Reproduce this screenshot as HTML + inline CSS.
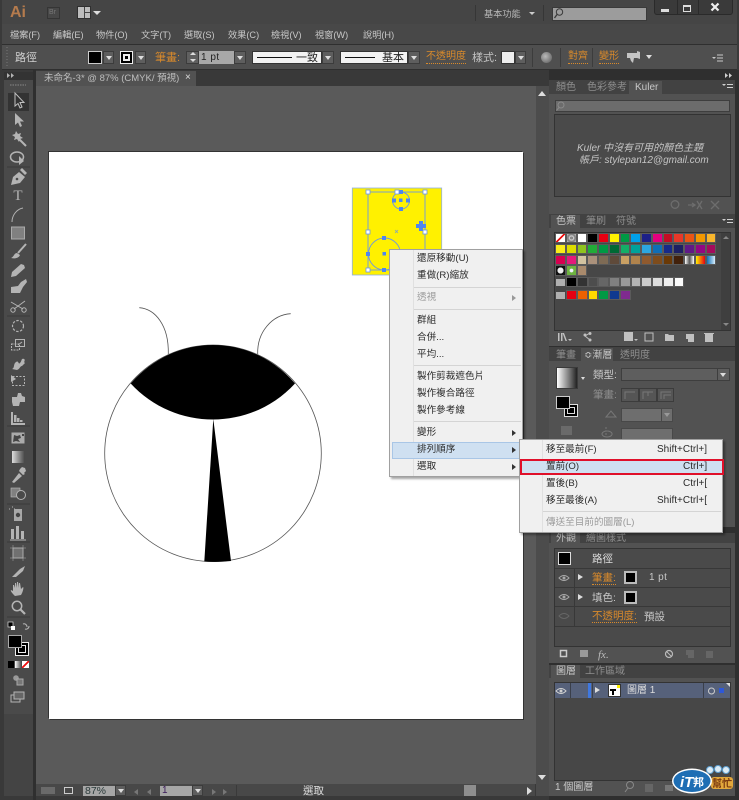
<!DOCTYPE html>
<html><head><meta charset="utf-8"><style>
html,body{margin:0;padding:0;background:#3a3a3a}
#r{position:relative;width:739px;height:800px;overflow:hidden;background:#3a3a3a;font-family:"Liberation Sans","Noto Sans CJK TC",sans-serif;font-size:10px;color:#c8c8c8;filter:blur(.3px)}
.b{position:absolute;box-sizing:border-box}
.t{position:absolute;line-height:14px;white-space:nowrap;transform:translateY(1px)}
.o{color:#d98a2b}
.u{border-bottom:1px dotted #d98a2b;line-height:12px}
.d{color:#8e8e8e}
.n{font-size:9.2px}
.dd{position:absolute;box-sizing:border-box;background:#5e5e5e;border:1px solid #3c3c3c}
.dd:after{content:"";position:absolute;left:50%;top:50%;margin:-2px 0 0 -3px;border:3px solid transparent;border-top:4px solid #ddd;border-bottom:0}
.m{color:#2b2b2b;font-size:9.6px}
.sep{position:absolute;height:1px;background:#d4d4d4}
.ar{position:absolute;border:3px solid transparent;border-left:4px solid #333;border-right:0}
.sw{position:absolute;display:flex}
.sw i{display:block;width:10.75px;height:10.4px;box-sizing:border-box;border:1px solid #5a5a5a;flex:none}
svg{position:absolute;left:0;top:0}
</style></head><body><div id="r">

<!-- chrome rows -->
<div class="b" style="left:2px;top:0;width:735px;height:24px;background:#454545"></div>
<div class="b" style="left:2px;top:24px;width:735px;height:20px;background:#484848"></div>
<div class="b" style="left:2px;top:44px;width:735px;height:26px;background:#4f4f4f;border-top:1px solid #2f2f2f;border-bottom:1px solid #2f2f2f"></div>
<div class="b" style="left:0;top:70px;width:739px;height:730px;background:#393939"></div>

<!-- title row -->
<div class="t" style="left:10px;top:5px;font-size:16px;font-weight:bold;color:#b57b4d">Ai</div>
<div class="b" style="left:47px;top:7px;width:13px;height:12px;border:1px solid #353535;background:#484848"></div>
<div class="t" style="left:49px;top:5px;font-size:7px;color:#777">Br</div>
<div class="b" style="left:77px;top:6px;width:14px;height:13px;background:#bdbdbd;border:1px solid #2f2f2f"></div>
<div class="b" style="left:84px;top:7px;width:1px;height:11px;background:#444"></div>
<div class="b" style="left:84px;top:12px;width:6px;height:1px;background:#444"></div>
<div class="b" style="left:93px;top:11px;border:4px solid transparent;border-top:4px solid #ddd;border-bottom:0"></div>
<div class="b" style="left:475px;top:5px;width:1px;height:16px;background:#363636"></div>
<div class="t n" style="left:484px;top:6px;color:#b8b8b8">基本功能</div>
<div class="b" style="left:529px;top:12px;border:3px solid transparent;border-top:3px solid #ccc;border-bottom:0"></div>
<div class="b" style="left:543px;top:5px;width:1px;height:16px;background:#363636"></div>
<div class="b" style="left:552px;top:7px;width:95px;height:14px;background:#9c9c9c;border:1px solid #3a3a3a"></div>
<div class="b" style="left:654px;top:0;width:79px;height:15px;background:#3a3a3a;border:1px solid #2a2a2a;border-top:0;border-radius:0 0 3px 3px"></div>
<div class="b" style="left:677px;top:0;width:1px;height:14px;background:#2a2a2a"></div>
<div class="b" style="left:698px;top:0;width:1px;height:14px;background:#2a2a2a"></div>
<div class="b" style="left:661px;top:9px;width:8px;height:3px;background:#ddd"></div>
<div class="b" style="left:683px;top:5px;width:8px;height:7px;border:1px solid #ddd;border-top-width:2px"></div>
<svg width="739" height="800" viewBox="0 0 739 800">
<path d="M711.500 3.500l7 7M718.500 3.500l-7 7" stroke="#eee" stroke-width="2.200"/>
<circle cx="559.500" cy="12" r="3.200" fill="none" stroke="#3a3a3a" stroke-width="1"/><path d="M557 14.500l-2.500 3.500" stroke="#3a3a3a" stroke-width="1.300"/>
<path d="M7 47v20" stroke="#777" stroke-width="1" stroke-dasharray="1 2"/>
<path d="M627 53h10v-2l3 1v7l-3-1h-3l-1 5-2-2-1-3h-3z" fill="#c4c4c4"/>
<path d="M712 57h4l-2 2zM717 54.500h6v1h-6zM717 57.500h6v1h-6zM717 60.500h6v1h-6z" fill="#c8c8c8"/>
</svg>

<!-- menu row -->
<div class="t n" style="left:10px;top:27px">檔案(F)</div>
<div class="t n" style="left:53px;top:27px">編輯(E)</div>
<div class="t n" style="left:96px;top:27px">物件(O)</div>
<div class="t n" style="left:141px;top:27px">文字(T)</div>
<div class="t n" style="left:184px;top:27px">選取(S)</div>
<div class="t n" style="left:228px;top:27px">效果(C)</div>
<div class="t n" style="left:271px;top:27px">檢視(V)</div>
<div class="t n" style="left:315px;top:27px">視窗(W)</div>
<div class="t n" style="left:363px;top:27px">說明(H)</div>

<!-- control bar -->
<div class="t" style="left:15px;top:50px;font-size:11px;color:#d0d0d0">路徑</div>
<div class="b" style="left:88px;top:51px;width:14px;height:13px;background:#000;border:1px solid #ccc"></div>
<div class="dd" style="left:103px;top:51px;width:11px;height:13px"></div>
<div class="b" style="left:120px;top:51px;width:13px;height:13px;background:#000;border:1px solid #eee"></div>
<div class="b" style="left:123px;top:54px;width:7px;height:7px;border:2px solid #eee;background:#000"></div>
<div class="dd" style="left:135px;top:51px;width:11px;height:13px"></div>
<div class="t o" style="left:155px;top:50px;font-size:11px">筆畫:</div>
<div class="b" style="left:186px;top:51px;width:13px;height:13px;background:#606060;border:1px solid #3c3c3c"></div>
<div class="b" style="left:190px;top:52px;border:3px solid transparent;border-bottom:3px solid #ddd;border-top:0"></div>
<div class="b" style="left:190px;top:59px;border:3px solid transparent;border-top:3px solid #ddd;border-bottom:0"></div>
<div class="b" style="left:199px;top:51px;width:35px;height:13px;background:#a8a8a8"></div>
<div class="t" style="left:201px;top:50px;font-size:10px;color:#222;letter-spacing:.5px">1 pt</div>
<div class="dd" style="left:234px;top:51px;width:12px;height:13px"></div>
<div class="b" style="left:252px;top:51px;width:70px;height:13px;background:#f2f2f2;border:1px solid #333"></div>
<div class="b" style="left:257px;top:57px;width:35px;height:1px;background:#111"></div>
<div class="t" style="left:296px;top:50px;font-size:11px;color:#222">一致</div>
<div class="dd" style="left:322px;top:51px;width:12px;height:13px"></div>
<div class="b" style="left:340px;top:51px;width:68px;height:13px;background:#f2f2f2;border:1px solid #333"></div>
<div class="b" style="left:345px;top:57px;width:30px;height:1px;background:#111"></div>
<div class="t" style="left:382px;top:50px;font-size:11px;color:#222">基本</div>
<div class="dd" style="left:408px;top:51px;width:12px;height:13px"></div>
<div class="t o u" style="left:426px;top:50px;font-size:10px">不透明度</div>
<div class="t" style="left:472px;top:50px;font-size:11px;color:#c4c4c4">樣式:</div>
<div class="b" style="left:501px;top:51px;width:14px;height:13px;background:#eee;border:1px solid #333"></div>
<div class="dd" style="left:515px;top:51px;width:11px;height:13px"></div>
<div class="b" style="left:532px;top:48px;width:1px;height:19px;background:#3c3c3c"></div>
<div class="b" style="left:541px;top:52px;width:11px;height:11px;border-radius:50%;background:radial-gradient(circle at 40% 40%,#bbb,#555)"></div>
<div class="b" style="left:560px;top:48px;width:1px;height:19px;background:#3c3c3c"></div>
<div class="t o u" style="left:568px;top:50px;font-size:10px">對齊</div>
<div class="b" style="left:592px;top:48px;width:1px;height:19px;background:#3c3c3c"></div>
<div class="t o u" style="left:599px;top:50px;font-size:10px">變形</div>
<div class="b" style="left:646px;top:55px;border:3px solid transparent;border-top:4px solid #ddd;border-bottom:0"></div>

<!-- document tab & canvas -->
<div class="b" style="left:36px;top:71px;width:160px;height:15px;background:#525252"></div>
<div class="t" style="left:44px;top:71px;font-size:9.500px;color:#bdbdbd">未命名-3* @ 87% (CMYK/ 預視)</div>
<div class="t" style="left:185px;top:70px;font-size:10px;color:#ddd">×</div>
<div class="b" style="left:36px;top:86px;width:500px;height:698px;background:#5a5a5a"></div>
<div class="b" style="left:536px;top:86px;width:13px;height:698px;background:#4c4c4c"></div>
<div class="b" style="left:538px;top:91px;border:5px solid transparent;border-bottom:5px solid #ddd;border-top:0;border-left-width:4px;border-right-width:4px"></div>
<div class="b" style="left:538px;top:775px;border:5px solid transparent;border-top:5px solid #ddd;border-bottom:0;border-left-width:4px;border-right-width:4px"></div>
<div class="b" style="left:49px;top:152px;width:474px;height:567px;background:#fff;box-shadow:-1px -1px 0 #333,1px 1px 0 #333"></div>

<!-- artwork -->
<svg width="739" height="800" viewBox="0 0 739 800">
<circle cx="213" cy="453.300" r="108.300" fill="#fff" stroke="#555" stroke-width=".8"/>
<path d="M130.700 383.500C175 332.200 251 332.200 295 383.500C251 431.500 175 431.500 130.700 383.500Z" fill="#000"/>
<path d="M213.300 419L204.300 561.500Q218 562.500 231 561Z" fill="#000"/>
<path d="M139.300 307.700C155 309 169 325 168.300 354" fill="none" stroke="#555" stroke-width=".8"/>
<path d="M290.700 313.700C272 315 257 332 257.700 354" fill="none" stroke="#555" stroke-width=".8"/>
<rect x="352.300" y="188" width="89.400" height="87" fill="#fff100" stroke="#8fb0e8" stroke-width=".8"/>
<g fill="none" stroke="#6a96e6" stroke-width=".9">
<rect x="368" y="192" width="57" height="78"/>
<circle cx="401" cy="200.500" r="8.500"/>
<circle cx="384.500" cy="254" r="16"/>
</g>
<g fill="#4f86ee">
<rect x="399" y="190" width="4" height="4"/><rect x="399" y="198.500" width="3.500" height="3.500"/><rect x="392" y="198.500" width="4" height="4"/><rect x="406" y="198.500" width="4" height="4"/><rect x="399" y="207" width="4" height="4"/>
<rect x="382" y="236" width="4" height="4"/><rect x="382.500" y="252" width="3.500" height="3.500"/><rect x="366" y="252" width="4" height="4"/><rect x="382" y="268" width="4" height="4"/>
<path d="M419 221h4v3h3v4h-3v3h-4v-3h-3v-4h3z"/>
</g>
<g fill="#fff" stroke="#6a96e6" stroke-width=".8">
<rect x="366" y="190" width="4" height="4"/><rect x="395" y="190" width="4" height="4"/><rect x="423" y="190" width="4" height="4"/><rect x="366" y="230" width="4" height="4"/><rect x="423" y="230" width="4" height="4"/><rect x="366" y="268" width="4" height="4"/>
</g>
<path d="M395 230l3 3M398 230l-3 3" stroke="#6a96e6" stroke-width=".6"/>
</svg>

<!-- left toolbar -->
<div class="b" style="left:4px;top:72px;width:29px;height:8px;background:#333"></div>
<div class="b" style="left:4px;top:80px;width:29px;height:634px;background:#4a4a4a"></div>
<div class="b" style="left:4px;top:714px;width:29px;height:82px;background:#444"></div>
<div class="b" style="left:33px;top:70px;width:3px;height:730px;background:#2f2f2f"></div>
<div class="b" style="left:8px;top:93px;width:21px;height:18px;background:#333"></div>
<svg width="739" height="800" viewBox="0 0 739 800">
<defs><linearGradient id="tg"><stop offset="0" stop-color="#ddd"/><stop offset="1" stop-color="#444"/></linearGradient></defs>
<path d="M7 73l3 2.500-3 2.500zM11 73l3 2.500-3 2.500z" fill="#b4b4b4"/>
<path d="M10 85h16" stroke="#888" stroke-dasharray="1.500 1"/>
<path d="M7 167h23M7 316h23M7 426h23M7 504h23M7 542h23M7 617h23" stroke="#3a3a3a"/>
<g fill="#b4b4b4" stroke="none">
<g transform="translate(18,101)"><path d="M-3-8v13l3-2.500 2 4.500 2-1-2-4.500h4z" fill="#333" stroke="#c0c0c0"/></g>
<g transform="translate(18,120)"><path d="M-3-7v12l3-2.500 2 4.500 2-1-2-4.500h4z"/></g>
<g transform="translate(18,138)"><path d="M-2-7l2 3 3-1-1 3 3 2-3 1-1 3-2-3-3 1 1-3-3-2 3-1z"/><path d="M1 1l7 7" stroke="#b4b4b4" stroke-width="2"/></g>
<g transform="translate(18,158)"><ellipse cx="-1" cy="-1" rx="6.500" ry="5" fill="none" stroke="#b4b4b4" stroke-width="1.500"/><path d="M1-2v9l5-4z"/></g>
<g transform="translate(18,177)"><path d="M-7 8l2-8 6-5 6 5-5 6z"/><path d="M2-7l2-2 5 5-2 2z"/><circle cx="-1" cy="2" r="1.300" fill="#4a4a4a"/></g>
<text x="18" y="200" text-anchor="middle" style="font-family:'Liberation Serif',serif;font-size:15px">T</text>
<g transform="translate(18,215)"><path d="M-6 7C-6 0-1-6 5-7" fill="none" stroke="#b4b4b4"/></g>
<g transform="translate(18,233)"><rect x="-6.500" y="-6" width="13" height="12" fill="#808080" stroke="#aaa"/></g>
<g transform="translate(18,251)"><path d="M-7 7C-4 6-4 2-1 2L2 4C1 7-3 8-7 7z"/><path d="M0 2l8-9" stroke="#b4b4b4" stroke-width="2"/></g>
<g transform="translate(18,270)"><path d="M-7 7l1-5 9-8 3 1 1 3-9 8z"/></g>
<g transform="translate(18,287)"><path d="M-7 0L0-1 3-5 8-8 9-5 5 0 2 6H-7z"/></g>
<g transform="translate(18,306)" fill="none" stroke="#b4b4b4"><circle cx="-5" cy="4" r="2.200"/><circle cx="6" cy="4" r="2.200"/><path d="M-7-4L5 3M7-5L-4 3"/></g>
<g transform="translate(18,326)"><circle r="5.500" fill="none" stroke="#b4b4b4" stroke-width="1.200" stroke-dasharray="2.500 1.500"/></g>
<g transform="translate(18,345)" fill="none" stroke="#b4b4b4"><rect x="-6.500" y="-1" width="8" height="6" stroke-dasharray="2 1"/><rect x="-2.500" y="-5.500" width="9" height="7"/><path d="M0 0l4-3"/></g>
<g transform="translate(18,363)"><path d="M-6 6c3-1 1-5 4-7s2 3 4 1 1-5 4-4c2 1-1 3 1 4l-3 3c-2 0-2 3-5 4z"/></g>
<g transform="translate(18,381)" fill="none" stroke="#b4b4b4"><rect x="-5.500" y="-4.500" width="12" height="9" stroke-dasharray="2 1.500"/><path d="M-7-6l5 4-5 3z" fill="#b4b4b4" stroke="none"/></g>
<g transform="translate(18,400)"><path d="M-6-3h5l1-4h3l1 3 3 1v5h-5l-1 4h-6l-1-4z"/></g>
<g transform="translate(18,419)"><path d="M-7 6v-13h2v11h12v2zM-4 3v-7h2.500v7zM-1 3v-4h2.500v4zM2 3v-2h2.500v2z"/></g>
<g transform="translate(18,438)"><rect x="-6.500" y="-5.500" width="13" height="11" fill="#aaa"/><path d="M-4-3l3 1 3-1 1 3-3 1 2 3-4-1-3 1zM4-4h2v2H4z" fill="#444"/></g>
<rect x="12" y="451" width="13" height="12" fill="url(#tg)"/>
<g transform="translate(18,475)"><path d="M-6 7l7-9 3 3-8 7z"/><path d="M2-6l2-2 3 1 1 3-2 2 1 1-2 1-4-4z"/></g>
<g transform="translate(18,493)"><rect x="-7" y="-5" width="9" height="9" fill="#808080" stroke="#bbb" stroke-width=".6"/><circle cx="3" cy="2" r="4.500" fill="#4a4a4a" stroke="#b4b4b4"/></g>
<g transform="translate(18,515)"><path d="M-9-6h2M-6-8h1M-4-6h1" stroke="#b4b4b4" stroke-dasharray="1 1" fill="none"/><rect x="-4" y="-6" width="8" height="12" fill="#a8a8a8"/><circle cy="0" r="2.200" fill="#444"/></g>
<g transform="translate(18,533)"><path d="M-7 6V-4h3V6zM-2 6V-7h3V6zM3 6V-2h3V6z"/><path d="M-8 7H8" stroke="#b4b4b4"/></g>
<g transform="translate(18,553)"><rect x="-5" y="-5" width="10" height="10" fill="#707070" stroke="#aaa"/><path d="M-8-5h16M-8 5h16M-5-8v16M5-8v16" stroke="#aaa" stroke-width=".5"/></g>
<g transform="translate(18,571)"><path d="M-6 6l8-8 5-3-2 5-7 6z"/></g>
<g transform="translate(18,589)"><path d="M-3 7c-2-2-5-5-4-6l2 1v-6l1 0 1 3v-5l1 0 1 5v-6l1 0 1 6v-5l1 0 1 6 2-2c1 0 0 5-2 8z"/></g>
<g transform="translate(18,607)"><circle cx="-1" cy="-1" r="4.700" fill="none" stroke="#b4b4b4" stroke-width="1.500"/><path d="M2 2l5 5" stroke="#b4b4b4" stroke-width="2.200"/></g>
<path d="M23 624a3 3 0 0 1 4 3M29 626a3 3 0 0 1-4 3" fill="none" stroke="#b4b4b4"/>
<rect x="8" y="622" width="5" height="5" fill="#000" stroke="#ddd" stroke-width=".7"/><rect x="11" y="626" width="4" height="4" fill="#fff"/>
<circle cx="16" cy="678" r="2.800" fill="#999"/><rect x="17" y="679" width="6" height="6" fill="#777" stroke="#aaa"/>
<rect x="11" y="695" width="9" height="7" fill="none" stroke="#b4b4b4"/><rect x="14" y="692" width="10" height="7" fill="#666" stroke="#b4b4b4"/>
</g>
</svg>
<div class="b" style="left:15px;top:642px;width:14px;height:14px;background:#000;border:1px solid #eee"></div>
<div class="b" style="left:18px;top:645px;width:8px;height:8px;background:#000;border:1px solid #eee"></div>
<div class="b" style="left:8px;top:635px;width:14px;height:13px;background:#000;border:1px solid #aaa"></div>
<div class="b" style="left:8px;top:661px;width:6px;height:7px;background:#000"></div>
<div class="b" style="left:15px;top:661px;width:6px;height:7px;background:linear-gradient(90deg,#fff,#555)"></div>
<div class="b" style="left:22px;top:661px;width:7px;height:7px;background:linear-gradient(135deg,#fff 40%,#e11 40%,#e11 60%,#fff 60%)"></div>

<!-- status bar -->
<div class="b" style="left:36px;top:784px;width:499px;height:12px;background:#484848"></div>
<div class="b" style="left:41px;top:787px;width:14px;height:7px;background:#6a6a6a"></div>
<div class="b" style="left:64px;top:787px;width:9px;height:7px;border:1px solid #ccc"></div>
<div class="b" style="left:83px;top:786px;width:32px;height:10px;background:#a6a6a6"></div>
<div class="t" style="left:85px;top:783px;font-size:10.500px;color:#2a3a3a">87%</div>
<div class="dd" style="left:115px;top:785px;width:11px;height:11px"></div>
<div class="b" style="left:147px;top:789px;border:3px solid transparent;border-right:4px solid #777;border-left:0"></div>
<div class="b" style="left:134px;top:789px;border:3px solid transparent;border-right:4px solid #777;border-left:0"></div>
<div class="b" style="left:160px;top:786px;width:32px;height:10px;background:#a6a6a6"></div>
<div class="t" style="left:162px;top:783px;font-size:10px;color:#3a1a5a">1</div>
<div class="dd" style="left:192px;top:785px;width:11px;height:11px"></div>
<div class="b" style="left:212px;top:789px;border:3px solid transparent;border-left:4px solid #777;border-right:0"></div>
<div class="b" style="left:223px;top:789px;border:3px solid transparent;border-left:4px solid #777;border-right:0"></div>
<div class="b" style="left:236px;top:785px;width:1px;height:11px;background:#3a3a3a"></div>
<div class="t" style="left:303px;top:783px;font-size:10.500px;color:#ddd">選取</div>
<div class="b" style="left:464px;top:785px;width:12px;height:11px;background:#8e8e8e"></div>
<div class="b" style="left:527px;top:787px;border:4px solid transparent;border-left:5px solid #ddd;border-right:0"></div>
<div class="b" style="left:536px;top:784px;width:13px;height:12px;background:#4c4c4c"></div>

<!-- right panels -->
<div class="b" style="left:549px;top:70px;width:190px;height:730px;background:#2f2f2f"></div>
<div class="b" style="left:549px;top:80px;width:186px;height:134px;background:#525252"></div>
<div class="b" style="left:549px;top:80px;width:186px;height:14px;background:#424242"></div>
<div class="b" style="left:629px;top:81px;width:33px;height:13px;background:#525252"></div>
<div class="t d" style="left:556px;top:80px;font-size:10px">顏色</div>
<div class="t d" style="left:587px;top:80px;font-size:10px">色彩參考</div>
<div class="t" style="left:635px;top:80px;font-size:10px;color:#c8c8c8">Kuler</div>
<div class="b" style="left:555px;top:100px;width:175px;height:12px;background:#6c6c6c;border:1px solid #3e3e3e"></div>
<div class="b" style="left:554px;top:114px;width:177px;height:83px;background:#4a4a4a;border:1px solid #333"></div>
<div class="t" style="left:577px;top:141px;font-size:10px;font-style:italic;color:#c4c4c4">Kuler 中沒有可用的顏色主題</div>
<div class="t" style="left:579px;top:153px;font-size:10px;font-style:italic;color:#c4c4c4">帳戶: stylepan12@gmail.com</div>

<div class="b" style="left:549px;top:214px;width:186px;height:132px;background:#525252"></div>
<div class="b" style="left:549px;top:214px;width:186px;height:14px;background:#424242"></div>
<div class="b" style="left:551px;top:215px;width:29px;height:13px;background:#525252"></div>
<div class="t" style="left:556px;top:214px;font-size:10px;color:#c8c8c8">色票</div>
<div class="t d" style="left:586px;top:214px;font-size:10px">筆刷</div>
<div class="t d" style="left:616px;top:214px;font-size:10px">符號</div>
<div class="b" style="left:554px;top:232px;width:177px;height:99px;background:#474747;border:1px solid #333"></div>
<div class="b" style="left:721px;top:233px;width:9px;height:97px;background:#3f3f3f"></div>
<div class="b" style="left:723px;top:236px;border:3px solid transparent;border-bottom:3px solid #888;border-top:0"></div>
<div class="b" style="left:723px;top:323px;border:3px solid transparent;border-top:3px solid #888;border-bottom:0"></div>
<div class="sw" style="left:555px;top:233px">
<i style="background:linear-gradient(135deg,#fff 42%,#e11 42%,#e11 58%,#fff 58%)"></i><i style="background:radial-gradient(circle,#888 25%,#ddd 30%,#777 60%,#ccc)"></i><i style="background:#fff"></i><i style="background:#000"></i><i style="background:#e60012"></i><i style="background:#fff100"></i><i style="background:#009944"></i><i style="background:#00a0e9"></i><i style="background:#1d2088"></i><i style="background:#e4007f"></i><i style="background:#c30d23"></i><i style="background:#e83828"></i><i style="background:#ea5514"></i><i style="background:#f39800"></i><i style="background:#f8b62d"></i></div>
<div class="sw" style="left:555px;top:243.700px">
<i style="background:#f9ed1a"></i><i style="background:#dcdd00"></i><i style="background:#8fc31f"></i><i style="background:#22ac38"></i><i style="background:#009944"></i><i style="background:#006934"></i><i style="background:#13ae67"></i><i style="background:#00a29a"></i><i style="background:#2ca6e0"></i><i style="background:#0f6eb6"></i><i style="background:#172a88"></i><i style="background:#1d2063"></i><i style="background:#601986"></i><i style="background:#920783"></i><i style="background:#a40b5d"></i></div>
<div class="sw" style="left:555px;top:254.500px">
<i style="background:#d7004f"></i><i style="background:#e4197b"></i><i style="background:#d3c3a0"></i><i style="background:#aa917b"></i><i style="background:#7e6b55"></i><i style="background:#5f4a3a"></i><i style="background:#c9a063"></i><i style="background:#b0834c"></i><i style="background:#905a2e"></i><i style="background:#7e4c1c"></i><i style="background:#6a3906"></i><i style="background:#42210b"></i><i style="background:linear-gradient(90deg,#fff,#555,#fff)"></i><i style="background:linear-gradient(90deg,#fff100,#e60012)"></i><i style="background:linear-gradient(90deg,#0f6eb6,#d8eefc)"></i></div>
<div class="sw" style="left:555px;top:265.300px">
<i style="background:radial-gradient(circle,#eee 45%,#111 50%)"></i><i style="background:radial-gradient(circle,#eef 25%,#6db33f 35%)"></i><i style="background:#a98a6c"></i></div>
<div class="b" style="left:556px;top:279px;width:9px;height:7px;background:#b0b0b0"></div>
<div class="sw" style="left:566px;top:277px">
<i style="background:#000"></i><i style="background:#333"></i><i style="background:#4d4d4d"></i><i style="background:#666"></i><i style="background:#808080"></i><i style="background:#999"></i><i style="background:#b3b3b3"></i><i style="background:#ccc"></i><i style="background:#ddd"></i><i style="background:#eee"></i><i style="background:#fafafa"></i></div>
<div class="b" style="left:556px;top:292px;width:9px;height:7px;background:#b0b0b0"></div>
<div class="sw" style="left:566px;top:290px">
<i style="background:#e60012"></i><i style="background:#eb6100"></i><i style="background:#ffd900"></i><i style="background:#009944"></i><i style="background:#0f3990"></i><i style="background:#7f2b8f"></i></div>
<svg width="739" height="800" viewBox="0 0 739 800">
<circle cx="561" cy="105" r="3" fill="none" stroke="#8a8a8a"/><path d="M559 107.500l-2.500 3" stroke="#8a8a8a"/>
<g fill="none" stroke="#6d6d6d" stroke-width="1.300">
<circle cx="675" cy="204.500" r="3.800"/>
<path d="M688 205h7M692 203l3 2-3 2M697 201l5 8M702 201l-5 8"/>
<path d="M711 201l8 8M719 201l-8 8"/>
</g>
<g fill="#c0c0c0">
<path d="M558 333v8h1.500v-8zM561 333v8h1.500v-8zM564 333l3 8h-1.500l-3-8z"/>
<path d="M568 339h4l-2 2z"/>
<circle cx="585" cy="335" r="1.500"/><circle cx="590" cy="333.500" r="1.500"/><circle cx="590" cy="340" r="1.500"/><path d="M585 336l5-3M585 336l5 4" stroke="#c0c0c0" fill="none"/>
<rect x="624" y="332" width="9" height="9"/><path d="M634 339h4l-2 2z"/>
<rect x="645" y="333" width="8" height="8" fill="none" stroke="#c0c0c0"/>
<path d="M665 334h3l1 1h5v6h-9z"/>
<path d="M686 334h8v8h-6v-3h-2z"/>
<rect x="705" y="334" width="8" height="8"/><rect x="704" y="333" width="10" height="1"/>
</g>
<g fill="#d0d0d0">
<path d="M722 84h4l-2 2zM727 84h6v1h-6zM727 87h6v1h-6z"/>
<path d="M722 219h4l-2 2zM727 219h6v1h-6zM727 222h6v1h-6z"/>
<path d="M722 353h4l-2 2zM727 353h6v1h-6zM727 356h6v1h-6z"/>
<path d="M722 536h4l-2 2zM727 536h6v1h-6zM727 539h6v1h-6z"/>
<path d="M722 669h4l-2 2zM727 669h6v1h-6zM727 672h6v1h-6z"/>
<path d="M725 73l3 2.500-3 2.500zM729 73l3 2.500-3 2.500z"/>
</g>
</svg>

<div class="b" style="left:549px;top:347px;width:186px;height:180px;background:#525252"></div>
<div class="b" style="left:549px;top:347px;width:186px;height:14px;background:#424242"></div>
<div class="b" style="left:581px;top:348px;width:32px;height:13px;background:#525252"></div>
<div class="t d" style="left:556px;top:348px;font-size:10px">筆畫</div>
<div class="t" style="left:584px;top:348px;font-size:10px;color:#c8c8c8">≎漸層</div>
<div class="t d" style="left:620px;top:348px;font-size:10px">透明度</div>
<div class="b" style="left:556px;top:367px;width:22px;height:22px;background:linear-gradient(90deg,#fff,#222);border:1px solid #3a3a3a"></div>
<div class="b" style="left:581px;top:377px;border:2.500px solid transparent;border-top:3px solid #ddd;border-bottom:0"></div>
<div class="t" style="left:593px;top:367px;font-size:10.500px;color:#c8c8c8">類型:</div>
<div class="b" style="left:621px;top:368px;width:109px;height:13px;background:#5e5e5e;border:1px solid #3e3e3e"></div>
<div class="b" style="left:717px;top:369px;width:1px;height:11px;background:#3e3e3e"></div>
<div class="b" style="left:720px;top:373px;border:3px solid transparent;border-top:4px solid #ddd;border-bottom:0"></div>
<div class="t d" style="left:593px;top:387px;font-size:10.500px">筆畫:</div>
<div class="b" style="left:621px;top:388px;width:18px;height:14px;border:1px solid #3c3c3c;background:#555"></div>
<div class="b" style="left:639px;top:388px;width:18px;height:14px;border:1px solid #3c3c3c;background:#555"></div>
<div class="b" style="left:657px;top:388px;width:17px;height:14px;border:1px solid #3c3c3c;background:#555"></div>
<svg width="739" height="800" viewBox="0 0 739 800"><path d="M625 399v-7h10M643 399v-7h10M648 396v-4M661 399v-7h10M664 399v-4h7" fill="none" stroke="#777"/><path d="M606 417l5-6 5 6z" fill="none" stroke="#777"/><path d="M607 431a5 3 0 1 0 .1 0" fill="none" stroke="#777"/><path d="M605 428h2M605 431h2M605 434h2" stroke="#777"/></svg>
<div class="b" style="left:621px;top:408px;width:52px;height:14px;background:#6e6e6e;border:1px solid #484848"></div>
<div class="b" style="left:661px;top:409px;width:1px;height:12px;background:#484848"></div>
<div class="b" style="left:664px;top:413px;border:3px solid transparent;border-top:4px solid #999;border-bottom:0"></div>
<div class="b" style="left:621px;top:428px;width:52px;height:12px;background:#6e6e6e;border:1px solid #484848"></div>
<div class="b" style="left:564px;top:404px;width:14px;height:13px;background:#000;border:1px solid #ddd"></div>
<div class="b" style="left:567px;top:407px;width:8px;height:7px;background:#000;border:1px solid #ddd"></div>
<div class="b" style="left:556px;top:396px;width:14px;height:13px;background:#000;border:1px solid #ccc"></div>
<div class="b" style="left:561px;top:426px;width:11px;height:9px;background:#6a6a6a"></div>

<!-- appearance -->
<div class="b" style="left:549px;top:533px;width:186px;height:130px;background:#525252"></div>
<div class="b" style="left:549px;top:533px;width:186px;height:10px;background:#424242"></div>
<div class="b" style="left:551px;top:533px;width:29px;height:10px;background:#525252"></div>
<div class="t" style="left:556px;top:531px;font-size:10px;color:#bdbdbd">外觀</div>
<div class="t d" style="left:586px;top:531px;font-size:10px">繪圖樣式</div>
<div class="b" style="left:554px;top:548px;width:177px;height:99px;background:#4a4a4a;border:1px solid #333"></div>
<div class="b" style="left:555px;top:568px;width:175px;height:1px;background:#383838"></div>
<div class="b" style="left:555px;top:587px;width:175px;height:1px;background:#383838"></div>
<div class="b" style="left:555px;top:606px;width:175px;height:1px;background:#383838"></div>
<div class="b" style="left:555px;top:626px;width:175px;height:1px;background:#383838"></div>
<div class="b" style="left:574px;top:568px;width:1px;height:58px;background:#383838"></div>
<div class="b" style="left:558px;top:552px;width:13px;height:13px;background:#000;border:1px solid #ddd"></div>
<div class="t" style="left:592px;top:551px;font-size:10.500px;color:#ddd">路徑</div>
<div class="t o u" style="left:592px;top:571px;font-size:10.500px">筆畫:</div>
<div class="t" style="left:592px;top:590px;font-size:10.500px;color:#c8c8c8">填色:</div>
<div class="t o u" style="left:592px;top:609px;font-size:10.500px">不透明度:</div>
<div class="t" style="left:644px;top:609px;font-size:10.500px;color:#c8c8c8">預設</div>
<div class="t" style="left:649px;top:570px;font-size:10px;color:#c8c8c8;letter-spacing:.4px">1 pt</div>
<div class="b" style="left:624px;top:571px;width:13px;height:13px;background:#000;border:2px solid #bbb"></div>
<div class="b" style="left:624px;top:591px;width:13px;height:13px;background:#000;border:2px solid #bbb"></div>
<div class="b" style="left:578px;top:574px;border:3.500px solid transparent;border-left:5px solid #ddd;border-right:0"></div>
<div class="b" style="left:578px;top:594px;border:3.500px solid transparent;border-left:5px solid #ddd;border-right:0"></div>
<svg width="739" height="800" viewBox="0 0 739 800">
<g fill="none" stroke="#a8a8a8"><path d="M559 578q5-5 10 0q-5 5-10 0z"/><path d="M559 597q5-5 10 0q-5 5-10 0z"/><path d="M559 616q5-5 10 0q-5 5-10 0z" stroke="#666"/>
<rect x="560.500" y="650.500" width="6" height="6" stroke="#ccc" stroke-width="1.500"/><circle cx="669" cy="654" r="3.500" stroke="#bbb" stroke-width="1.200"/><path d="M666.500 651.500l5 5" stroke="#bbb"/></g>
<circle cx="564" cy="578" r="1.500" fill="#a8a8a8"/><circle cx="564" cy="597" r="1.500" fill="#a8a8a8"/>
<g fill="#666"><path d="M686 650h8v8h-6v-3h-2z"/><path d="M706 651h7v7h-7z"/><rect x="580" y="650" width="8" height="7" fill="#999"/></g>
</svg>
<div class="t" style="left:598px;top:647px;font-size:11px;font-style:italic;font-family:'Liberation Serif',serif;color:#bbb">fx.</div>

<!-- layers -->
<div class="b" style="left:549px;top:665px;width:186px;height:131px;background:#525252"></div>
<div class="b" style="left:549px;top:665px;width:186px;height:13px;background:#424242"></div>
<div class="b" style="left:551px;top:665px;width:29px;height:13px;background:#525252"></div>
<div class="t" style="left:556px;top:664px;font-size:10px;color:#c8c8c8">圖層</div>
<div class="t d" style="left:585px;top:664px;font-size:10px">工作區域</div>
<div class="b" style="left:554px;top:682px;width:177px;height:99px;background:#474747;border:1px solid #333"></div>
<div class="b" style="left:555px;top:683px;width:175px;height:15px;background:#56617a"></div>
<div class="b" style="left:570px;top:683px;width:1px;height:15px;background:#3a3f4a"></div>
<div class="b" style="left:588px;top:683px;width:3px;height:15px;background:#3f78e0"></div>
<div class="b" style="left:592px;top:683px;width:1px;height:15px;background:#3a3f4a"></div>
<div class="b" style="left:703px;top:683px;width:1px;height:15px;background:#3a3f4a"></div>
<div class="b" style="left:595px;top:687px;border:3.500px solid transparent;border-left:5px solid #ddd;border-right:0"></div>
<div class="b" style="left:608px;top:684px;width:13px;height:13px;background:#fff;border:1px solid #333"></div>
<div class="b" style="left:617px;top:685px;width:3px;height:3px;background:#fff100"></div>
<div class="b" style="left:610px;top:689px;width:6px;height:2px;background:#000"></div>
<div class="b" style="left:612px;top:691px;width:2px;height:4px;background:#000"></div>
<div class="t" style="left:627px;top:683px;font-size:10px;color:#ddd">圖層 1</div>
<svg width="739" height="800" viewBox="0 0 739 800"><g fill="none" stroke="#ccc"><circle cx="711.500" cy="691" r="3"/><path d="M556 691q5-5 10 0q-5 5-10 0z" stroke="#d0d0d0"/></g><circle cx="561" cy="691" r="1.500" fill="#d0d0d0"/><rect x="719" y="688" width="5" height="5" fill="#2e58d8"/><path d="M726 683h4v4z" fill="#ddd"/><circle cx="630" cy="785" r="3.500" fill="none" stroke="#888"/><path d="M628 788l-3 4" stroke="#888"/><rect x="645" y="784" width="8" height="8" fill="#666"/><rect x="665" y="785" width="8" height="6" fill="#777"/></svg>
<div class="t" style="left:555px;top:780px;font-size:10px;color:#c8c8c8">1 個圖層</div>

<!-- watermark -->
<svg width="739" height="800" viewBox="0 0 739 800">
<g fill="#dcecf6" stroke="#5d9fd0"><circle cx="710" cy="770" r="3.500"/><circle cx="718" cy="769" r="3.500"/><circle cx="726" cy="770" r="3.500"/></g>
<rect x="711" y="777" width="22" height="12" rx="3" fill="#e2a83c"/>
<ellipse cx="692" cy="781" rx="20" ry="12.500" fill="#fff"/>
<ellipse cx="692" cy="781" rx="18.500" ry="11" fill="#1e6eb4"/>
<text x="680" y="787" style="font:italic bold 15px 'Liberation Sans','Noto Sans CJK TC',sans-serif" fill="#fff">iT</text>
<text x="693" y="786" style="font:bold 11px 'Liberation Sans','Noto Sans CJK TC',sans-serif" fill="#fff">邦</text>
<text x="712" y="787" style="font:bold 10px 'Liberation Sans','Noto Sans CJK TC',sans-serif" fill="#7a3a10">幫忙</text>
</svg>

<!-- context menu -->
<div class="b" style="left:389px;top:249px;width:134px;height:228px;background:#f0f0f0;border:1px solid #a0a0a0;box-shadow:2px 2px 2px rgba(0,0,0,.35)"></div>
<div class="b" style="left:413px;top:250px;width:1px;height:226px;background:#e0e0e0"></div>
<div class="t m" style="left:417px;top:251px">還原移動(U)</div>
<div class="t m" style="left:417px;top:268px">重做(R)縮放</div>
<div class="sep" style="left:414px;top:287px;width:107px"></div>
<div class="t m" style="left:417px;top:290px;color:#9a9a9a">透視</div>
<div class="ar" style="left:512px;top:295px;border-left-color:#999"></div>
<div class="sep" style="left:414px;top:309px;width:107px"></div>
<div class="t m" style="left:417px;top:313px">群組</div>
<div class="t m" style="left:417px;top:330px">合併...</div>
<div class="t m" style="left:417px;top:347px">平均...</div>
<div class="sep" style="left:414px;top:365px;width:107px"></div>
<div class="t m" style="left:417px;top:369px">製作剪裁遮色片</div>
<div class="t m" style="left:417px;top:386px">製作複合路徑</div>
<div class="t m" style="left:417px;top:403px">製作參考線</div>
<div class="sep" style="left:414px;top:421px;width:107px"></div>
<div class="t m" style="left:417px;top:425px">變形</div>
<div class="ar" style="left:512px;top:430px"></div>
<div class="b" style="left:392px;top:442px;width:129px;height:17px;background:#cfe0f1;border:1px solid #a9c6e6"></div>
<div class="t m" style="left:417px;top:442px">排列順序</div>
<div class="ar" style="left:512px;top:447px"></div>
<div class="t m" style="left:417px;top:459px">選取</div>
<div class="ar" style="left:512px;top:464px"></div>

<!-- submenu -->
<div class="b" style="left:519px;top:439px;width:204px;height:94px;background:#f0f0f0;border:1px solid #a0a0a0;box-shadow:2px 2px 2px rgba(0,0,0,.35)"></div>
<div class="b" style="left:542px;top:440px;width:1px;height:92px;background:#e0e0e0"></div>
<div class="t m" style="left:546px;top:442px">移至最前(F)</div>
<div class="t m" style="left:657px;top:442px;font-size:10px">Shift+Ctrl+]</div>
<div class="b" style="left:520px;top:459px;width:204px;height:16px;background:#cfe0f1;border:2px solid #e0102a"></div>
<div class="t m" style="left:546px;top:459px">置前(O)</div>
<div class="t m" style="left:683px;top:459px;font-size:10px">Ctrl+]</div>
<div class="t m" style="left:546px;top:476px">置後(B)</div>
<div class="t m" style="left:683px;top:476px;font-size:10px">Ctrl+[</div>
<div class="t m" style="left:546px;top:493px">移至最後(A)</div>
<div class="t m" style="left:657px;top:493px;font-size:10px">Shift+Ctrl+[</div>
<div class="sep" style="left:543px;top:511px;width:178px"></div>
<div class="t m" style="left:546px;top:515px;color:#9a9a9a">傳送至目前的圖層(L)</div>

</div></body></html>
